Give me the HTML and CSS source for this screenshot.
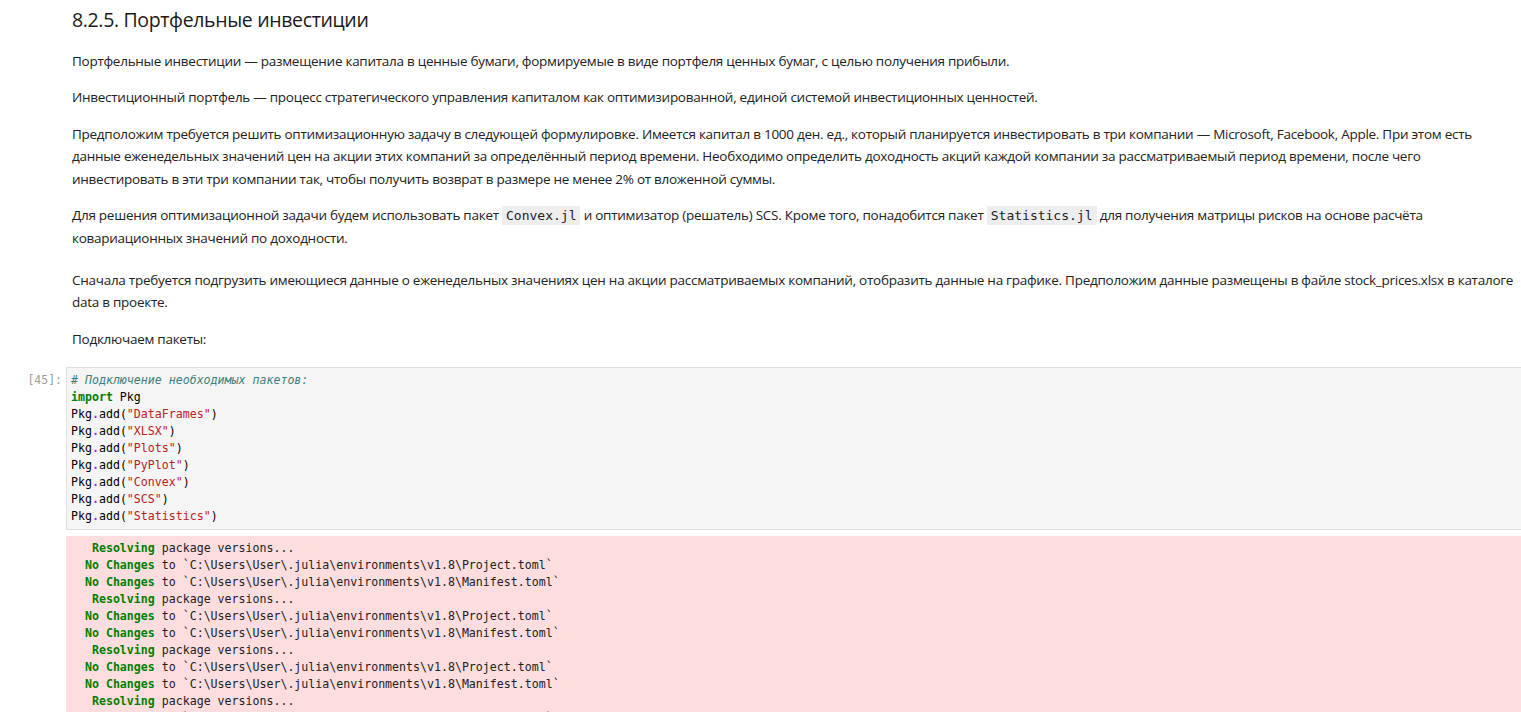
FILE: index.html
```html
<!DOCTYPE html>
<html lang="ru">
<head>
<meta charset="utf-8">
<title>8.2.5. Портфельные инвестиции</title>
<link rel="stylesheet" href="styles.css">
</head>
<body>
<div class="notebook">
  <div class="cell md-cell">
    <div class="prompt"></div>
    <div class="md-body">
      <h2>8.2.5. Портфельные инвестиции</h2>
      <p>Портфельные инвестиции — размещение капитала в ценные бумаги, формируемые в виде портфеля ценных бумаг, с целью получения прибыли.</p>
      <p>Инвестиционный портфель — процесс стратегического управления капиталом как оптимизированной, единой системой инвестиционных ценностей.</p>
      <p>Предположим требуется решить оптимизационную задачу в следующей формулировке. Имеется капитал в 1000 ден. ед., который планируется инвестировать в три компании — Microsoft, Facebook, Apple. При этом есть данные еженедельных значений цен на акции этих компаний за определённый период времени. Необходимо определить доходность акций каждой компании за рассматриваемый период времени, после чего инвестировать в эти три компании так, чтобы получить возврат в размере не менее 2% от вложенной суммы.</p>
      <p>Для решения оптимизационной задачи будем использовать пакет <code>Convex.jl</code> и оптимизатор (решатель) SCS. Кроме того, понадобится пакет <code>Statistics.jl</code> для получения матрицы рисков на основе расчёта ковариационных значений по доходности.</p>
    </div>
  </div>
  <div class="cell md-cell md-second">
    <div class="prompt"></div>
    <div class="md-body">
      <p>Сначала требуется подгрузить имеющиеся данные о еженедельных значениях цен на акции рассматриваемых компаний, отобразить данные на графике. Предположим данные размещены в файле stock_prices.xlsx в каталоге data в проекте.</p>
      <p class="last">Подключаем пакеты:</p>
    </div>
  </div>
  <div class="cell code-cell">
    <div class="prompt code-prompt">[45]:</div>
    <pre class="input"><span class="c"># Подключение необходимых пакетов:</span>
<span class="k">import</span> Pkg
Pkg<span class="o">.</span>add(<span class="s">"DataFrames"</span>)
Pkg<span class="o">.</span>add(<span class="s">"XLSX"</span>)
Pkg<span class="o">.</span>add(<span class="s">"Plots"</span>)
Pkg<span class="o">.</span>add(<span class="s">"PyPlot"</span>)
Pkg<span class="o">.</span>add(<span class="s">"Convex"</span>)
Pkg<span class="o">.</span>add(<span class="s">"SCS"</span>)
Pkg<span class="o">.</span>add(<span class="s">"Statistics"</span>)</pre>
  </div>
  <div class="cell out-cell">
    <div class="prompt"></div>
    <pre class="output"><span class="g">   Resolving</span> package versions...
<span class="g">  No Changes</span> to `C:\Users\User\.julia\environments\v1.8\Project.toml`
<span class="g">  No Changes</span> to `C:\Users\User\.julia\environments\v1.8\Manifest.toml`
<span class="g">   Resolving</span> package versions...
<span class="g">  No Changes</span> to `C:\Users\User\.julia\environments\v1.8\Project.toml`
<span class="g">  No Changes</span> to `C:\Users\User\.julia\environments\v1.8\Manifest.toml`
<span class="g">   Resolving</span> package versions...
<span class="g">  No Changes</span> to `C:\Users\User\.julia\environments\v1.8\Project.toml`
<span class="g">  No Changes</span> to `C:\Users\User\.julia\environments\v1.8\Manifest.toml`
<span class="g">   Resolving</span> package versions...
<span class="g">  No Changes</span> to `C:\Users\User\.julia\environments\v1.8\Project.toml`
<span class="g">  No Changes</span> to `C:\Users\User\.julia\environments\v1.8\Manifest.toml`</pre>
  </div>
</div>
</body>
</html>
```
FILE: styles.css
```css
html, body {
  margin: 0;
  padding: 0;
  background: #ffffff;
  overflow: hidden;
}

body {
  font-family: "Open Sans", "Noto Sans", sans-serif;
  color: #222222;
}

.notebook {
  display: flex;
  flex-direction: column;
}

.cell {
  display: flex;
}

.prompt {
  flex: none;
  width: 66px;
}

.md-body {
  flex: 1;
  min-width: 0;
  padding: 0 6px;
}

.md-body h2 {
  font-size: 19.5px;
  letter-spacing: -0.35px;
  font-weight: 400;
  line-height: 24px;
  margin: 8px 0 18px;
  color: #1a1a1a;
}

.md-body p {
  font-size: 13.5px;
  letter-spacing: -0.27px;
  line-height: 22.4px;
  margin: 0 0 14px;
}

.md-body p.last {
  margin-bottom: 0;
}

.md-second {
  padding-top: 5px;
}

.md-body code {
  font-family: "DejaVu Sans Mono", monospace;
  font-size: 13px;
  letter-spacing: 0;
  background: #eeeeee;
  padding: 2px 4px;
}

.code-cell {
  margin-top: 17px;
}

.code-prompt {
  font-family: "DejaVu Sans Mono", monospace;
  font-size: 11.5px;
  line-height: 17px;
  color: #9e9e9e;
  text-align: right;
  box-sizing: border-box;
  padding: 5px 4px 0 0;
}

.input,
.output {
  flex: 1;
  min-width: 0;
  margin: 0;
  font-family: "DejaVu Sans Mono", monospace;
  font-size: 11.6px;
  line-height: 17px;
  white-space: pre;
}

.input {
  background: #f5f5f5;
  border: 1px solid #e0e0e0;
  border-right: none;
  padding: 4px;
  color: #000000;
}

.out-cell {
  margin-top: 6px;
}

.output {
  background: #fddddd;
  padding: 4px 4px 4px 5px;
  color: #222222;
}

.c { color: #408080; font-style: italic; }
.k { color: #008000; font-weight: bold; }
.s { color: #ba2121; }
.o { color: #aa22ff; font-weight: bold; }
.g { color: #008000; font-weight: bold; }
```
